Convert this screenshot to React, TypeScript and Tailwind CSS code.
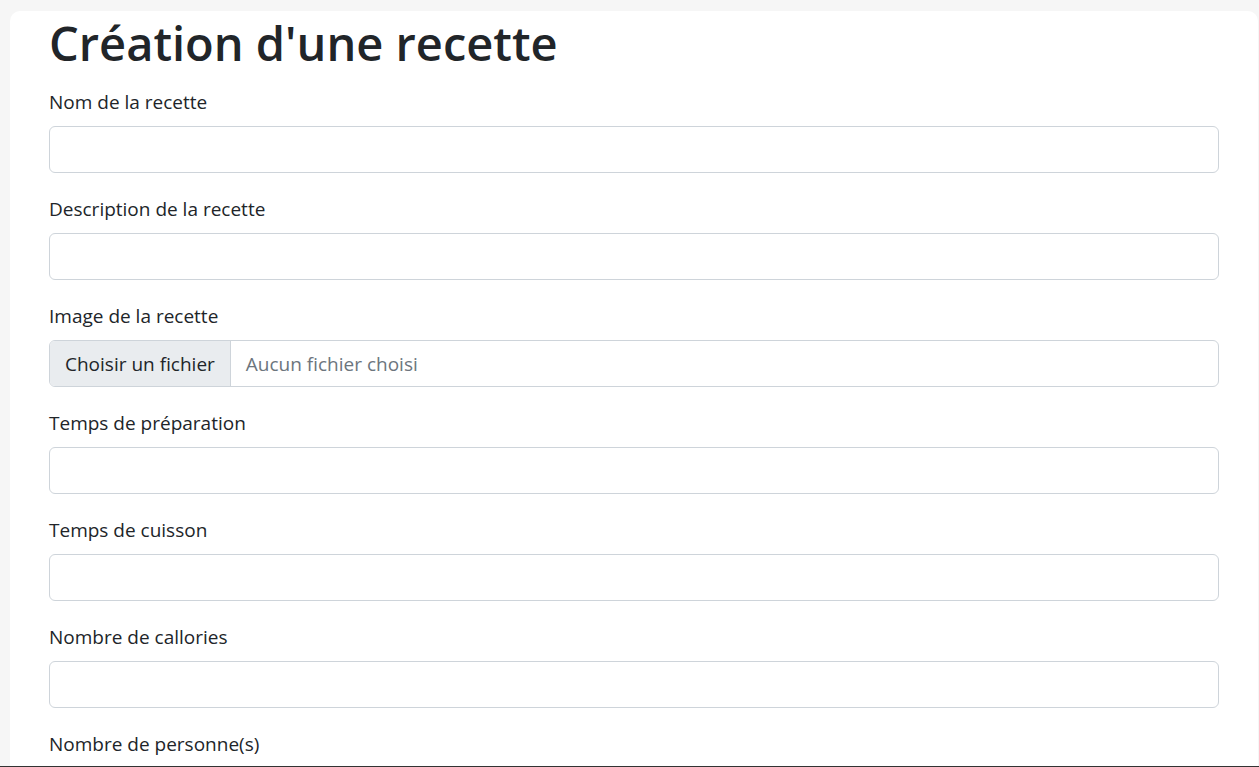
const fields = [
  { label: "Nom de la recette", type: "text" },
  { label: "Description de la recette", type: "text" },
  { label: "Image de la recette", type: "file" },
  { label: "Temps de préparation", type: "text" },
  { label: "Temps de cuisson", type: "text" },
  { label: "Nombre de callories", type: "text" },
  { label: "Nombre de personne(s)", type: "text" },
];

function Field({ label, type }: { label: string; type: string }) {
  return (
    <div className="mb-[21px]">
      <label className="block h-[30px] leading-[30px] mb-[9px] text-[19px] text-[#212529]">
        {label}
      </label>
      {type === "file" ? (
        <div className="flex h-[47px] border border-[#ced4da] rounded-[6px] overflow-hidden text-[19px]">
          <div className="flex items-center pt-[2px] px-[15px] bg-[#e9ecef] border-r border-[#ced4da] text-[#212529]">
            Choisir un fichier
          </div>
          <div className="flex items-center pt-[2px] px-[15px] text-[#6c757d]">Aucun fichier choisi</div>
        </div>
      ) : (
        <input
          type="text"
          className="block w-full h-[47px] border border-[#ced4da] rounded-[6px] px-[15px] text-[19px] outline-none bg-white"
        />
      )}
    </div>
  );
}

export default function App() {
  return (
    <div
      className="min-h-screen bg-[#f6f6f6] pt-[11px] pl-[10px] pr-px"
      style={{ fontFamily: '"Open Sans", "Noto Sans", sans-serif' }}
    >
      <div className="bg-white rounded-t-[10px] pl-[39px] pr-[39px]">
        <h1 className="text-[47px] font-semibold leading-[60px] pt-[2px] pb-[14px] text-[#212529]">
          Création d'une recette
        </h1>
        {fields.map((f) => (
          <Field key={f.label} label={f.label} type={f.type} />
        ))}
      </div>
      <div className="fixed bottom-0 left-0 right-0 h-px bg-[#333]" />
    </div>
  );
}
